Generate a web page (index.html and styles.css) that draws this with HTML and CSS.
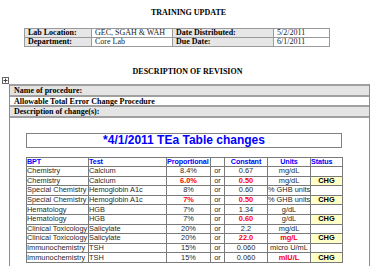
FILE: index.html
```html
<!DOCTYPE html>
<html>
<head>
<meta charset="utf-8">
<link rel="stylesheet" href="styles.css">
</head>
<body>
<div class="title">TRAINING UPDATE</div>
<table class="meta">
  <colgroup><col class="m1"><col class="m2"><col class="m3"><col class="m4"></colgroup>
  <tr><td class="lbl">Lab Location:</td><td>GEC, SGAH &amp; WAH</td><td class="lbl">Date Distributed:</td><td>5/2/2011</td></tr>
  <tr><td class="lbl">Department:</td><td>Core Lab</td><td class="lbl">Due Date:</td><td>6/1/2011</td></tr>
</table>
<div class="heading">DESCRIPTION OF REVISION</div>
<div class="doc">
  <svg class="handle" width="7" height="7" viewBox="0 0 7 7"><rect x="0.5" y="0.5" width="6" height="6" fill="#fff" stroke="#666" stroke-width="1"/><path d="M3.5 1.5v4M1.5 3.5h4" stroke="#444" stroke-width="1"/></svg>
  <div class="row gray">Name of procedure:</div>
  <div class="row white">Allowable Total Error Change Procedure</div>
  <div class="row gray">Description of change(s):</div>
  <div class="content">
    <div class="box">*4/1/2011 TEa Table changes</div>
    <table class="data">
      <colgroup><col class="c1"><col class="c2"><col class="c3"><col class="c4"><col class="c5"><col class="c6"><col class="c7"></colgroup>
      <tr class="hd"><th class="l">BPT</th><th class="l">Test</th><th class="l">Proportional</th><th></th><th>Constant</th><th>Units</th><th class="l">Status</th></tr>
      <tr><td class="l">Chemistry</td><td class="l">Calcium</td><td>8.4%</td><td>or</td><td>0.67</td><td>mg/dL</td><td class="st"></td></tr>
      <tr><td class="l">Chemistry</td><td class="l">Calcium</td><td class="red">6.0%</td><td>or</td><td class="red">0.50</td><td>mg/dL</td><td class="chg">CHG</td></tr>
      <tr><td class="l">Special Chemistry</td><td class="l">Hemoglobin A1c</td><td>8%</td><td>or</td><td>0.60</td><td>% GHB units</td><td class="st"></td></tr>
      <tr><td class="l">Special Chemistry</td><td class="l">Hemoglobin A1c</td><td class="red">7%</td><td>or</td><td class="red">0.50</td><td>% GHB units</td><td class="chg">CHG</td></tr>
      <tr><td class="l">Hematology</td><td class="l">HGB</td><td>7%</td><td>or</td><td>1.34</td><td>g/dL</td><td class="st"></td></tr>
      <tr><td class="l">Hematology</td><td class="l">HGB</td><td>7%</td><td>or</td><td class="red">0.60</td><td>g/dL</td><td class="chg">CHG</td></tr>
      <tr><td class="l">Clinical Toxicology</td><td class="l">Salicylate</td><td>20%</td><td>or</td><td>2.2</td><td>mg/dL</td><td class="st"></td></tr>
      <tr><td class="l">Clinical Toxicology</td><td class="l">Salicylate</td><td>20%</td><td>or</td><td class="red">22.0</td><td class="red">mg/L</td><td class="chg">CHG</td></tr>
      <tr><td class="l">Immunochemistry</td><td class="l">TSH</td><td>15%</td><td>or</td><td>0.060</td><td>micro U/mL</td><td class="st"></td></tr>
      <tr><td class="l">Immunochemistry</td><td class="l">TSH</td><td>15%</td><td>or</td><td>0.060</td><td class="red">mIU/L</td><td class="chg">CHG</td></tr>
    </table>
  </div>
</div>
</body>
</html>
```
FILE: styles.css
```css
html, body {
  margin: 0;
  padding: 0;
  background: #fff;
}
body {
  width: 375px;
  height: 266px;
  overflow: hidden;
  font-family: "Liberation Serif", "Times New Roman", serif;
  color: #000;
}
.title {
  text-align: center;
  font-weight: bold;
  font-size: 8px;
  line-height: 9px;
  margin-top: 8px;
  padding-left: 2px;
}
.meta {
  margin: 11px 0 0 24px;
  width: 305px;
  border-collapse: collapse;
  table-layout: fixed;
  font-size: 8px;
}
.meta .m1 { width: 67px; }
.meta .m2 { width: 81px; }
.meta .m3 { width: 101px; }
.meta .m4 { width: 56px; }
.meta td {
  border: 1px solid #9a9a9a;
  height: 8px;
  line-height: 8px;
  padding: 0 3px;
  white-space: nowrap;
  overflow: hidden;
  color: #222;
}
.meta td.lbl {
  background: #e6e6e6;
  font-weight: bold;
  color: #000;
}
.heading {
  text-align: center;
  font-weight: bold;
  font-size: 8px;
  line-height: 9px;
  margin-top: 20px;
}
.doc {
  position: relative;
  margin: 8px 0 0 9px;
  width: 359px;
  border-left: 1px solid #8c8c8c;
  border-right: 1px solid #8c8c8c;
  height: 183px;
}
.handle {
  position: absolute;
  left: -8px;
  top: -7px;
}
.row {
  font-weight: bold;
  font-size: 8px;
  padding-left: 4px;
  border-top: 2px solid #a0a0a0;
  height: 9px;
  line-height: 10px;
}
.row.gray {
  background: #e4e4e4;
}
.row.white {
  background: #fff;
  height: 8px;
  line-height: 9px;
}
.content {
  border-top: 2px solid #a0a0a0;
  padding: 15px 0 0 16px;
}
.box {
  width: 314px;
  height: 13px;
  border: 1px solid #808080;
  color: #0000ff;
  font-family: "Liberation Sans", Arial, sans-serif;
  font-weight: bold;
  font-size: 12px;
  line-height: 13px;
  text-align: center;
}
.data {
  margin-top: 9px;
  width: 316px;
  border-collapse: collapse;
  table-layout: fixed;
  font-family: "Liberation Sans", Arial, sans-serif;
  font-size: 7.4px;
}
.c1 { width: 62px; }
.c2 { width: 78px; }
.c3 { width: 44px; }
.c4 { width: 14px; }
.c5 { width: 43px; }
.c6 { width: 43px; }
.c7 { width: 32px; }
.data th, .data td {
  border: 1px solid #7a7a7a;
  padding: 0;
  height: 8.6px;
  line-height: 8px;
  text-align: center;
  white-space: nowrap;
  overflow: visible;
  color: #2a2a2a;
  font-weight: normal;
}
.data tr.hd th {
  height: 8px;
  color: #0000ff;
  font-weight: bold;
  font-size: 7.2px;
  letter-spacing: -0.1px;
}
.data .l {
  text-align: left;
  padding-left: 0;
}
.data td.red {
  color: #ff0000;
  font-weight: bold;
}
.data td.chg {
  background: #ffffc8;
  color: #000;
  font-weight: bold;
}
```
